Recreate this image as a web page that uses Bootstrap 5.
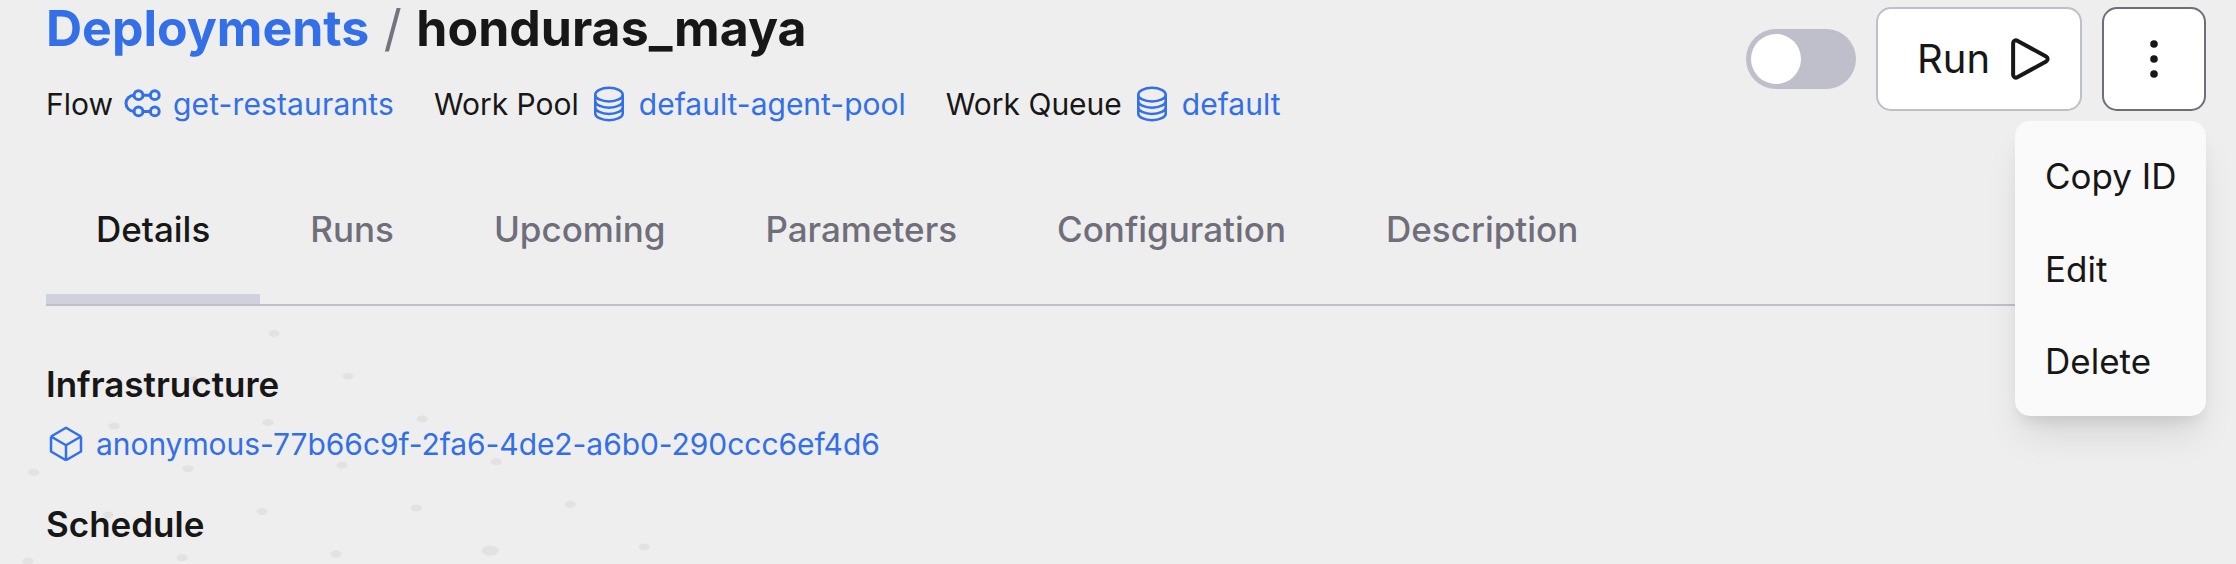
<!DOCTYPE html>
<html lang="en">
<head>
<meta charset="utf-8">
<title>Deployments / honduras_maya</title>
<link rel="stylesheet" href="https://cdn.jsdelivr.net/npm/bootstrap@5.3.0/dist/css/bootstrap.min.css">
<style>
  body{background:#eee;color:#171717;font-family:Inter,sans-serif;font-size:30px;line-height:40px;height:564px;overflow:hidden;position:relative}
  a{color:#326fe9;text-decoration:none}
  svg{flex:none;display:block}
  .specks{position:absolute;left:0;top:0;z-index:-1}
  .page{padding:0 30px 0 46px}
  .crumbs{font-size:50px;line-height:56px;font-weight:700;margin:0}
  .slash{color:#75737f;font-weight:400;margin:0 14.5px}
  .meta{gap:40px;margin-top:28px}
  .meta>div{gap:10px}
  .flow-link{letter-spacing:.14px}
  .infra-link{letter-spacing:-.06px}
  .actions{gap:20px;padding-top:7px}
  .toggle{width:110px;height:60px;border-radius:30px;background:#bfbecb;padding:5px}
  .toggle span{display:block;width:50px;height:50px;border-radius:50%;background:#fff}
  .btn-run,.btn-more{height:104px;border:2px solid #bfbecb;border-radius:15px;background:#fff;color:#171717;font-size:40px;line-height:60px;padding:0}
  .btn-run{width:206px;gap:10px;padding-left:19px}
  .btn-more{width:104px;border-color:#6f6d7a}
  .btn-more:hover{background:#fff;border-color:#6f6d7a}
  .tabs{border-bottom:2px solid #bfbecb;font-size:35px;line-height:50px;font-weight:500;margin-top:46px}
  .tabs .nav-link{padding:34px 50px 40px;color:#6f6e7a;border-bottom:10px solid transparent;border-radius:0}
  .tabs .nav-link.active{color:#171717;border-color:#cfd2dc}
  .label{font-size:35px;line-height:50px;font-weight:600;margin:0}
  .infra-title{margin-top:53px}
  .infra{margin-top:15px;gap:10px}
  .schedule-title{margin-top:35px}
  .popmenu{position:absolute;right:30px;top:121px;width:191px;height:295px;background:#fafafa;border-radius:15px;padding:9px 0;box-shadow:0 25px 38px -8px rgba(0,0,0,.10),0 10px 15px -6px rgba(0,0,0,.10);font-size:35px;line-height:50px;margin:0;list-style:none}
  .popmenu li{padding:21px 30px 21.5px;white-space:nowrap}
</style>
</head>
<body>
<svg class="specks" width="700" height="564" fill="#e2e2e2">
  <defs><ellipse id="s" rx="5.6" ry="3.5"/></defs>
  <use href="#s" x="274" y="333.5"/><use href="#s" x="348" y="376.2"/><use href="#s" x="422.3" y="419"/><use href="#s" x="496.3" y="461.7"/><use href="#s" x="570.3" y="504.3"/><use href="#s" x="644.3" y="547"/>
  <use href="#s" x="193" y="380"/><use href="#s" x="268" y="422.5"/><use href="#s" x="342" y="465.3"/><use href="#s" x="416.3" y="508"/><ellipse cx="490.2" cy="550.7" rx="8.5" ry="5"/>
  <use href="#s" x="114" y="426"/><use href="#s" x="188" y="468.7"/><use href="#s" x="262" y="511.4"/><use href="#s" x="336" y="554"/>
  <use href="#s" x="33.7" y="472.3"/><use href="#s" x="108" y="515"/><use href="#s" x="182" y="557.7"/><use href="#s" x="28" y="561"/>
</svg>
<div class="page position-relative">
  <header class="d-flex justify-content-between align-items-start">
    <div>
      <h1 class="crumbs text-nowrap"><a href="#">Deployments</a><span class="slash">/</span><span>honduras_maya</span></h1>
      <div class="meta d-flex align-items-center text-nowrap">
        <div class="d-flex align-items-center"><span>Flow</span>
          <svg width="40" height="40" viewBox="0 0 40 40" fill="none" stroke="#326fe9" stroke-width="3"><circle cx="15.500" cy="11.200" r="4.400"/><circle cx="31.800" cy="11.200" r="4.400"/><circle cx="15.500" cy="27.400" r="4.400"/><circle cx="31.800" cy="27.400" r="4.400"/><path d="M19.900 11.200h7.500M19.900 27.400h7.500M11.100 11.200a8.100 8.100 0 0 0 0 16.200"/></svg>
          <a class="flow-link" href="#">get-restaurants</a></div>
        <div class="d-flex align-items-center"><span>Work Pool</span>
          <svg width="40" height="40" viewBox="0 0 24 24" fill="none" stroke="#326fe9" stroke-width="1.5"><path d="M20.250 6.375c0 2.278-3.694 4.125-8.250 4.125S3.750 8.653 3.750 6.375m16.500 0c0-2.278-3.694-4.125-8.250-4.125S3.750 4.097 3.750 6.375m16.500 0v11.250c0 2.278-3.694 4.125-8.250 4.125s-8.250-1.847-8.250-4.125V6.375m16.500 3.750c0 2.278-3.694 4.125-8.250 4.125s-8.250-1.847-8.250-4.125m16.500 3.750c0 2.278-3.694 4.125-8.250 4.125s-8.250-1.847-8.250-4.125"/></svg>
          <a href="#">default-agent-pool</a></div>
        <div class="d-flex align-items-center"><span>Work Queue</span>
          <svg width="40" height="40" viewBox="0 0 24 24" fill="none" stroke="#326fe9" stroke-width="1.5"><path d="M20.250 6.375c0 2.278-3.694 4.125-8.250 4.125S3.750 8.653 3.750 6.375m16.500 0c0-2.278-3.694-4.125-8.250-4.125S3.750 4.097 3.750 6.375m16.500 0v11.250c0 2.278-3.694 4.125-8.250 4.125s-8.250-1.847-8.250-4.125V6.375m16.500 3.750c0 2.278-3.694 4.125-8.250 4.125s-8.250-1.847-8.250-4.125m16.500 3.750c0 2.278-3.694 4.125-8.250 4.125s-8.250-1.847-8.250-4.125"/></svg>
          <a href="#">default</a></div>
      </div>
    </div>
    <div class="actions d-flex align-items-center">
      <div class="toggle"><span></span></div>
      <button class="btn btn-run d-flex align-items-center justify-content-center">Run
        <svg width="60" height="60" viewBox="0 0 24 24" fill="none" stroke="#171717" stroke-width="1.600" stroke-linejoin="round"><path d="M5.250 5.653c0-.856.917-1.398 1.667-.986l11.540 6.347a1.125 1.125 0 0 1 0 1.972l-11.540 6.347a1.125 1.125 0 0 1-1.667-.986V5.653z"/></svg></button>
      <button class="btn btn-more d-flex align-items-center justify-content-center" aria-label="More"><svg width="50" height="50" fill="#171717"><circle cx="25" cy="10" r="3.800"/><circle cx="25" cy="25" r="3.800"/><circle cx="25" cy="40" r="3.800"/></svg></button>
    </div>
  </header>
  <nav class="tabs nav">
    <a class="nav-link active" href="#">Details</a><a class="nav-link" href="#">Runs</a><a class="nav-link" href="#">Upcoming</a><a class="nav-link" href="#">Parameters</a><a class="nav-link" href="#">Configuration</a><a class="nav-link" href="#">Description</a>
  </nav>
  <section>
    <h2 class="label infra-title">Infrastructure</h2>
    <div class="infra d-flex align-items-center">
      <svg width="40" height="40" viewBox="0 0 24 24" fill="none" stroke="#326fe9" stroke-width="1.500" stroke-linejoin="round"><path d="M21 7.500l-9-5.250L3 7.500m18 0l-9 5.250m9-5.250v9l-9 5.250M3 7.500l9 5.250M3 7.500v9l9 5.250m0-9v9"/></svg>
      <a class="infra-link" href="#">anonymous-77b66c9f-2fa6-4de2-a6b0-290ccc6ef4d6</a></div>
    <h2 class="label schedule-title">Schedule</h2>
  </section>
  <ul class="popmenu"><li>Copy ID</li><li>Edit</li><li>Delete</li></ul>
</div>
<script src="https://cdn.jsdelivr.net/npm/bootstrap@5.3.0/dist/js/bootstrap.bundle.min.js"></script>
</body>
</html>
